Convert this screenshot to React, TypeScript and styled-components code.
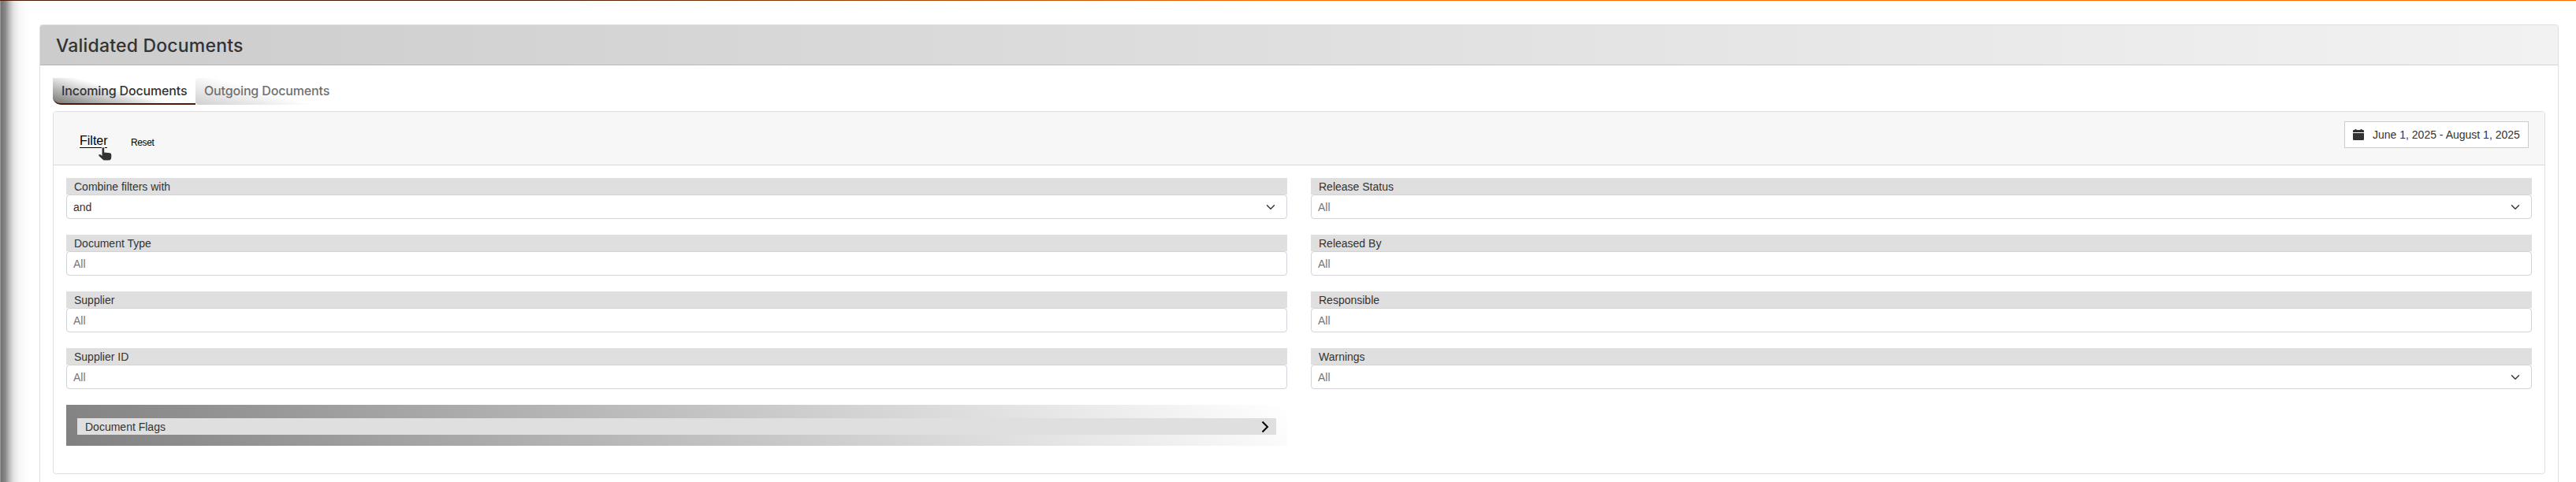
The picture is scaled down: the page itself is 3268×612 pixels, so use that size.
import React from 'react';
import styled, { createGlobalStyle } from 'styled-components';

const Global = createGlobalStyle`
  * { box-sizing: border-box; }
  body { margin: 0; background: #fff; color: #333; font: 14px/21px "Liberation Sans", Arial, sans-serif; }
`;

const Page = styled.main`
  height: 612px;
  overflow: hidden;
  padding: 30px 22px 0 50px;
  border-top: 1px solid;
  border-image: linear-gradient(90deg, #4a1a08 0, #4a1a08 20%, #ff6a00 50%) 1;
  background: linear-gradient(90deg, #999 0, #999 1px, #707070 1px, #8b8b8b 7px, #bdbdbd 12px, #e2e2e2 17px, #f6f6f6 24px, #fdfdfd 33px, #fff 42px);
`;

const Card = styled.section`
  height: 640px;
  border: 1px solid #dfdfdf;
  border-radius: 4px;
  background: #fff;
`;

const CardHeader = styled.header`
  display: flex;
  align-items: center;
  height: 51px;
  padding-left: 20px;
  border-bottom: 1px solid rgba(0, 0, 0, 0.125);
  border-radius: 3px 3px 0 0;
  background: linear-gradient(90deg, #ccc, #f2f2f2);
`;

const Title = styled.h1`
  margin: 2px 0 0;
  font: 500 23px/28px Inter, sans-serif;
  letter-spacing: 0.2px;
`;

const Tabs = styled.nav`
  display: flex;
  padding: 16px 16px 0;
`;

const Tab = styled.button<{ $active?: boolean }>`
  width: 181px;
  height: 34px;
  padding: 0 0 ${p => (p.$active ? 0 : 2)}px 11px;
  border: 0 solid #4f1a04;
  border-bottom-width: ${p => (p.$active ? 2 : 0)}px;
  border-radius: ${p => (p.$active ? '0 0 0 10px' : '4px 0 0 4px')};
  background: linear-gradient(${p => (p.$active ? '15deg, #777, #fff 50%' : '15deg, #d0d0d0, #fff 50%')});
  color: ${p => (p.$active ? '#333' : '#707070')};
  font: 500 16px/24px Inter, sans-serif;
  letter-spacing: -0.15px;
  text-align: left;
  white-space: nowrap;
`;

const Panel = styled.section`
  height: 461px;
  margin: 8px 16px 0;
  border: 1px solid #dfdfdf;
  border-radius: 4px;
`;

const PanelHeader = styled.header`
  display: flex;
  align-items: flex-start;
  height: 68px;
  padding: 12px 20px 0 33px;
  border-bottom: 1px solid #dadada;
  border-radius: 3px 3px 0 0;
  background: #f7f7f7;
`;

const FilterLink = styled.a`
  position: relative;
  margin-top: 15px;
  width: 35px;
  height: 19px;
  border-bottom: 1px solid #000;
  color: #000;
  font-size: 16px;
  line-height: 20px;
  white-space: nowrap;
`;

const Pointer = styled.svg`
  position: absolute;
  left: 23px;
  top: 18px;
`;

const ResetLink = styled.a`
  margin: 18px auto 0 30px;
  color: #000;
  font-size: 12px;
  line-height: 18px;
  letter-spacing: -0.4px;
`;

const DateButton = styled.button`
  display: flex;
  align-items: center;
  gap: 11px;
  width: 234px;
  height: 34px;
  padding: 0 0 0 10px;
  border: 1px solid #ccc;
  background: #fff;
  color: #333;
  font: 14px "Liberation Sans", sans-serif;
  white-space: nowrap;
`;

const Filters = styled.div`
  display: grid;
  grid-template-columns: 1fr 1fr;
  column-gap: 30px;
  row-gap: 20px;
  padding: 16px;
`;

const Label = styled.div`
  height: 21px;
  padding-left: 10px;
  background: #dfdfdf;
  line-height: 22px;
`;

const Control = styled.div<{ $filled?: boolean }>`
  display: flex;
  align-items: center;
  justify-content: space-between;
  height: 31px;
  padding: 1px 14px 0 8px;
  border: 1px solid #ced4da;
  border-radius: 4px;
  color: ${p => (p.$filled ? '#333' : '#777')};
`;

const Flags = styled.div`
  height: 52px;
  padding: 17px 14px 14px;
  background: linear-gradient(45deg, #808080, #fff);
`;

const FlagsLabel = styled(Label)`
  display: flex;
  align-items: center;
  justify-content: space-between;
  padding-right: 9px;
  line-height: 20px;
`;

type FieldProps = { label: string; value?: string; select?: boolean };

const Field = ({ label, value, select }: FieldProps) => (
  <div>
    <Label>{label}</Label>
    <Control $filled={!!value}>
      {value ?? 'All'}
      {select && (
        <svg width="12" height="12" viewBox="0 0 16 16" fill="none" stroke="#343a40" strokeWidth="2" strokeLinecap="round" strokeLinejoin="round">
          <path d="m2 5 6 6 6-6" />
        </svg>
      )}
    </Control>
  </div>
);

const fields: FieldProps[] = [
  { label: 'Combine filters with', value: 'and', select: true },
  { label: 'Release Status', select: true },
  { label: 'Document Type' },
  { label: 'Released By' },
  { label: 'Supplier' },
  { label: 'Responsible' },
  { label: 'Supplier ID' },
  { label: 'Warnings', select: true },
];

export default function App() {
  return (
    <>
      <Global />
      <Page>
        <Card>
          <CardHeader><Title>Validated Documents</Title></CardHeader>
          <Tabs>
            <Tab $active>Incoming Documents</Tab>
            <Tab>Outgoing Documents</Tab>
          </Tabs>
          <Panel>
            <PanelHeader>
              <FilterLink>
                Filter
                <Pointer width="20" height="19" viewBox="0 0 20 19">
                  <path
                    d="M5.500 1.500Q5.500.3 6.800.3T8.200 1.500V6.500L15.500 7.300Q17.300 7.700 17.300 9.500V12Q17.300 16.500 14 16.500H8.500Q7 16.500 5.800 15L1.300 10.800Q.8 9.600 1.800 9.200 2.800 8.800 3.800 9.600L5.500 11Z"
                    fill="#333" stroke="#fff" strokeWidth="1.600" paintOrder="stroke"
                  />
                </Pointer>
              </FilterLink>
              <ResetLink>Reset</ResetLink>
              <DateButton>
                <svg width="14" height="16" viewBox="0 0 14 16" fill="#333">
                  <path d="M2.500 1h2v1h5V1h2v1H13q1 0 1 1v2H0V3q0-1 1-1h1.500zM0 6h14v8q0 1-1 1H1q-1 0-1-1z" />
                </svg>
                June 1, 2025 - August 1, 2025
              </DateButton>
            </PanelHeader>
            <Filters>
              {fields.map(f => <Field key={f.label} {...f} />)}
              <Flags>
                <FlagsLabel>
                  Document Flags
                  <svg width="10" height="16" viewBox="0 0 10 16" fill="none" stroke="#000" strokeWidth="2">
                    <path d="m1.500 1.500 6.500 6.500-6.500 6.500" />
                  </svg>
                </FlagsLabel>
              </Flags>
            </Filters>
          </Panel>
        </Card>
      </Page>
    </>
  );
}
